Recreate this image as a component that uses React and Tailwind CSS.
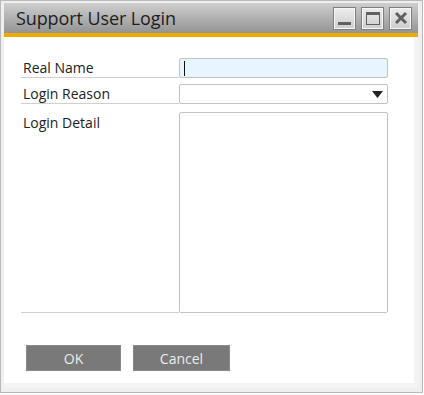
export default function App() {
  const font = { fontFamily: '"Open Sans", "Noto Sans", Arial, sans-serif' };
  return (
    <div
      className="w-[424px] h-[395px] bg-white flex flex-col"
      style={font}
    >
      <div className="w-[423px] h-[393px] border border-[#b9b9b9] bg-[#efefef] pt-[2px] pl-[3px] pr-[4px] pb-[4px] flex flex-col">
        {/* title bar */}
        <div className="h-[30px] bg-gradient-to-b from-[#cfcfcf] to-[#949494] flex items-center justify-between pl-[12px] pr-[6px] shrink-0">
          <span className="text-[18px] text-[#1e1e1e] leading-none tracking-[-0.1px]">Support User Login</span>
          <div className="flex gap-[5px] items-center">
            <div className="w-[23px] h-[23px] border border-[#7f7f7f] bg-gradient-to-b from-[#ececec] to-[#cdcdcd] shadow-[inset_0_0_0_1px_#f7f7f7] flex items-end justify-center pb-[4px]">
              <div className="w-[13px] h-[3px] bg-[#606060]" />
            </div>
            <div className="w-[23px] h-[23px] border border-[#7f7f7f] bg-gradient-to-b from-[#ececec] to-[#cdcdcd] shadow-[inset_0_0_0_1px_#f7f7f7] flex items-center justify-center">
              <div className="w-[14px] h-[13px] border border-[#606060] border-t-[3px]" />
            </div>
            <div className="w-[23px] h-[23px] border border-[#7f7f7f] bg-gradient-to-b from-[#ececec] to-[#cdcdcd] shadow-[inset_0_0_0_1px_#f7f7f7] flex items-center justify-center">
              <svg width="14" height="14" viewBox="0 0 14 14">
                <path d="M2 2 L12 12 M12 2 L2 12" stroke="#606060" strokeWidth="3" strokeLinecap="butt" />
              </svg>
            </div>
          </div>
        </div>
        <div className="h-[4px] bg-[#f0ab00] shrink-0" />
        {/* content */}
        <div className="flex-1 bg-white border-r-[4px] border-b-[5px] border-[#f4f4f4] pl-[17px] pt-[21px] flex flex-col">
          <div className="grid grid-cols-[158px_209px] gap-y-[6px]">
            <div className="h-[20px] border-b border-[#cfcfcf] flex items-end pl-[2px] text-[14px] text-[#222] leading-[19px]">Real Name</div>
            <div className="h-[20px] border border-[#c3c3c3] rounded-[2px] bg-[#e8f4fe] flex items-center pl-[4px]">
              <div className="w-[1px] h-[15px] bg-[#111]" />
            </div>
            <div className="h-[20px] border-b border-[#cfcfcf] flex items-end pl-[2px] text-[14px] text-[#222] leading-[19px]">Login Reason</div>
            <div className="h-[20px] border border-[#c3c3c3] rounded-[2px] bg-white flex items-center justify-end pr-[4px]">
              <svg width="11" height="7" viewBox="0 0 11 7">
                <path d="M0 0 H11 L5.5 7 Z" fill="#222" />
              </svg>
            </div>
            <div className="h-[201px] mt-[2px] border-b border-[#cfcfcf] pl-[2px] pt-[1px] text-[14px] text-[#222] leading-[19px]">Login Detail</div>
            <div className="h-[201px] mt-[2px] border border-[#c3c3c3] rounded-[2px] bg-white" />
          </div>
          <div className="flex gap-[12px] mt-[32px] pl-[5px]">
            <div className="w-[95px] h-[26px] bg-[#797979] border border-[#8a8a8a] flex items-center justify-center text-[14px] text-[#ececec]">OK</div>
            <div className="w-[97px] h-[26px] bg-[#797979] border border-[#8a8a8a] flex items-center justify-center text-[14px] text-[#ececec]">Cancel</div>
          </div>
        </div>
      </div>
    </div>
  );
}
